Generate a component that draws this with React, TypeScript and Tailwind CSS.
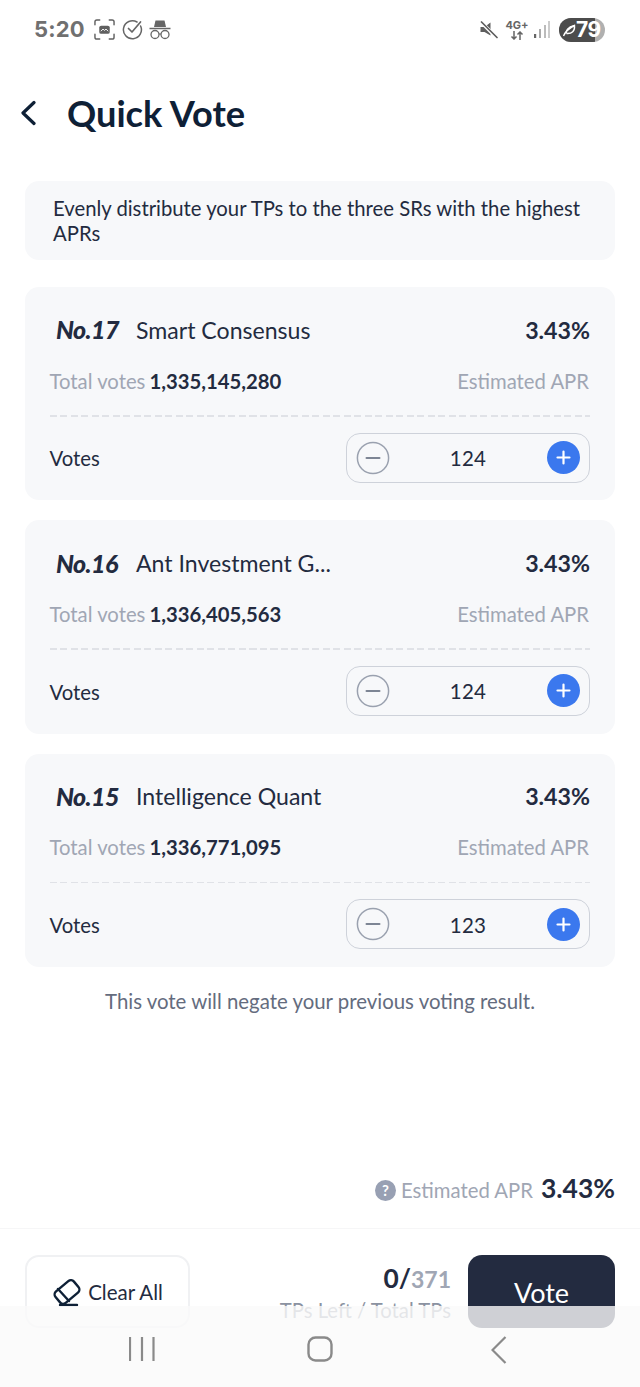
import React from "react";

function Minus() {
  return (
    <svg width="34" height="34" viewBox="0 0 34 34" fill="none">
      <circle cx="17" cy="17" r="15.6" stroke="#9aa1af" strokeWidth="1.5" />
      <path d="M10.5 17h13" stroke="#7d8594" strokeWidth="2" strokeLinecap="round" />
    </svg>
  );
}
function Plus() {
  return (
    <svg width="33" height="33" viewBox="0 0 33 33" fill="none">
      <circle cx="16.5" cy="16.5" r="16.5" fill="#3b78ee" />
      <path d="M10.5 16.5h12M16.5 10.5v12" stroke="#fff" strokeWidth="2.2" strokeLinecap="round" />
    </svg>
  );
}

function Card({ no, name, total, votes }: { no: string; name: string; total: string; votes: string }) {
  return (
    <div className="bg-[#f7f8fa] rounded-[14px] px-[25px] pt-[26px] h-[213.33px]">
      <div className="flex items-center justify-between h-[34px]">
        <div className="flex items-center">
          <span className="w-[86px] pl-[6px] text-[25px] font-black italic text-[#232b40] tracking-[-0.6px]">{no}</span>
          <span className="text-[23.1px] text-[#232b40]">{name}</span>
        </div>
        <span className="text-[23.2px] font-bold text-[#232b40]">3.43%</span>
      </div>
      <div className="flex items-center justify-between h-[34px] mt-[17px]">
        <div className="flex items-center -ml-[0.5px]">
          <span className="text-[20.3px] text-[#a0a6b4]">Total votes</span>
          <span className="text-[20.3px] font-bold text-[#232b40] ml-[4px]">{total}</span>
        </div>
        <span className="text-[20.3px] text-[#a0a6b4] mr-[1px]">Estimated APR</span>
      </div>
      <div className="h-[1.5px] mt-[17px] bg-[repeating-linear-gradient(90deg,#e0e2e7_0_7px,transparent_7px_10.5px)]" />
      <div className="flex items-center justify-between mt-[16px]">
        <span className="text-[20.3px] text-[#232b40] mt-[2px] -ml-[0.5px]">Votes</span>
        <div className="w-[244px] h-[50px] rounded-[14px] border border-[#ced2da] flex items-center justify-between pl-[9px] pr-[9px]">
          <Minus />
          <span className="text-[20.5px] text-[#232b40] tracking-[0.3px] mt-[2px] -ml-[1px]">{votes}</span>
          <Plus />
        </div>
      </div>
    </div>
  );
}

function StatusBar() {
  return (
    <div className="h-[58px] flex items-center justify-between pl-[34px] pr-[35px] pt-[1px] text-[#6a6a6a]">
      <div className="flex items-center">
        <span className="text-[22px] font-bold font-['Inter',sans-serif] tracking-[0.2px] text-[#707070] leading-none -mt-[2px]">5:20</span>
        <svg className="ml-[9px]" width="21" height="21" viewBox="0 0 22 22" fill="none" stroke="#606060" strokeWidth="1.5" strokeLinecap="round">
          <path d="M1 6V3a2 2 0 0 1 2-2h3M16 1h3a2 2 0 0 1 2 2v3M21 16v3a2 2 0 0 1-2 2h-3M6 21H3a2 2 0 0 1-2-2v-3" />
          <rect x="5.500" y="7" width="11" height="8.500" rx="2" fill="#606060" stroke="none" />
          <path d="M7.500 12.500l2-2 1.500 1.500 1.500-1.500 2 2" stroke="#fff" strokeWidth="1" />
        </svg>
        <svg className="ml-[7px]" width="21" height="21" viewBox="0 0 21 21" fill="none" stroke="#666" strokeWidth="1.5" strokeLinecap="round" strokeLinejoin="round">
          <path d="M18.600 7a9 9 0 1 1-3.600-4" />
          <path d="M6.500 9.500l3.500 3.500 8.500-10" strokeWidth="1.700" />
        </svg>
        <svg className="ml-[6px]" width="22" height="21" viewBox="0 0 22 21" fill="none" stroke="#666">
          <path d="M5 8l1.500-6.500h9L17 8z" fill="#666" stroke="none" />
          <path d="M0.500 9.500h21" strokeWidth="1.500" />
          <circle cx="6" cy="15.500" r="4" strokeWidth="1.300" />
          <circle cx="16" cy="15.500" r="4" strokeWidth="1.300" />
          <path d="M10 15h2" strokeWidth="1.200" />
        </svg>
      </div>
      <div className="flex items-center">
        <svg width="18" height="18" viewBox="0 0 18 18" className="mr-[9px]">
          <path d="M0.500 6h4L10.500 1.500v13L4.500 11h-4z" fill="#5e5e5e" />
          <path d="M1 1l16 16" stroke="#fff" strokeWidth="3.500" />
          <path d="M1.500 1l15.500 15.500" stroke="#5e5e5e" strokeWidth="1.700" strokeLinecap="round" />
        </svg>
        <div className="flex flex-col items-center w-[20px] mr-[7px] leading-none text-[#666]">
          <span className="text-[11px] font-bold font-['Inter',sans-serif] leading-[11px]">4G+</span>
          <svg width="14" height="9" viewBox="0 0 14 9" fill="none" stroke="#666" strokeWidth="1.500">
            <path d="M4 0v8M1.500 5.500L4 8l2.500-2.500M10 9V1M7.500 3.500L10 1l2.500 2.500" />
          </svg>
        </div>
        <svg width="16" height="18" viewBox="0 0 16 18" className="mr-[9px]">
          <rect x="0" y="13" width="2.200" height="4" fill="#666" />
          <rect x="5" y="8" width="2" height="9" fill="#aaa" />
          <rect x="10" y="4" width="2" height="13" fill="#bbb" />
          <rect x="14" y="0" width="2" height="17" fill="#ccc" />
        </svg>
        <div className="relative w-[46px] h-[24px] rounded-[12px] bg-[#b0b0b0] overflow-hidden">
          <div className="w-[36px] h-[24px] bg-[#4c4c4c]" />
          <svg className="absolute left-[3px] top-[6px]" width="14" height="13" viewBox="0 0 13 13" fill="none" stroke="#fff" strokeWidth="1.400">
            <path d="M1 12C3 7 7 4 12 1.500 12.500 7 9.500 10 4 9.500" />
            <path d="M4 9.500C3 7 5 3 12 1.500" />
          </svg>
          <span className="absolute left-[17px] top-[0px] text-[21px] font-bold text-white font-['Inter',sans-serif] leading-[24px] tracking-[-0.5px]">79</span>
        </div>
      </div>
    </div>
  );
}

export default function App() {
  return (
    <div className="relative h-[1387px] w-[640px] overflow-hidden bg-white flex flex-col font-['Lato',sans-serif]">
      <StatusBar />
      <div className="flex items-center h-[44px] mt-[33px] pl-[20px]">
        <svg width="16" height="26" viewBox="0 0 16 26" fill="none" stroke="#0e2036" strokeWidth="3.200" strokeLinecap="round" strokeLinejoin="round">
          <path d="M14 2.500L3 13l11 10.500" />
        </svg>
        <h1 className="ml-[31px] text-[36.2px] font-bold text-[#0e2036] leading-none">Quick Vote</h1>
      </div>
      <div className="mx-[25px] mt-[46px] bg-[#f7f8fa] rounded-[14px] h-[79px] pl-[28px] pr-[20px] pt-[15px] text-[20.3px] leading-[25px] text-[#232b40]">
        Evenly distribute your TPs to the three SRs with the highest APRs
      </div>
      <div className="mx-[25px] mt-[27px] flex flex-col gap-[20px]">
        <Card no="No.17" name="Smart Consensus" total="1,335,145,280" votes="124" />
        <Card no="No.16" name="Ant Investment G..." total="1,336,405,563" votes="124" />
        <Card no="No.15" name="Intelligence Quant" total="1,336,771,095" votes="123" />
      </div>
      <p className="mt-[21px] text-center text-[20.4px] leading-[26px] text-[#646c7e]">This vote will negate your previous voting result.</p>
      <div className="mt-auto">
        <div className="flex items-center justify-end pr-[25px] h-[40px]">
          <svg width="21" height="21" viewBox="0 0 21 21" className="mt-[2px]">
            <circle cx="10.500" cy="10.500" r="10.500" fill="#98a0b3" />
            <text x="10.500" y="16" textAnchor="middle" fontSize="15" fontWeight="700" fill="#fff" fontFamily="Lato">?</text>
          </svg>
          <span className="ml-[5px] text-[20.3px] text-[#a0a6b4] mt-[2px]">Estimated APR</span>
          <span className="ml-[8px] text-[26.500px] font-bold text-[#232b40]">3.43%</span>
        </div>
        <div className="mt-[19px] border-t border-[#f6f6f7] h-[159px] px-[25px] pt-[26px] flex items-start justify-between">
          <div className="w-[165px] h-[73px] pt-[2px] rounded-[14px] border-2 border-[#f0f1f3] flex items-center justify-center">
            <svg width="30" height="30" viewBox="0 0 30 30" fill="none" stroke="#0e2036" strokeWidth="2.400" strokeLinejoin="round" strokeLinecap="round" className="mt-[1px]">
              <rect x="3" y="6.500" width="24" height="15" rx="4" transform="rotate(-40 15 14)" />
              <path d="M6 11l11 12" />
              <path d="M8 27h17" />
            </svg>
            <span className="ml-[6px] text-[20.500px] text-[#232b40]">Clear All</span>
          </div>
          <div className="ml-auto mr-[17px] flex flex-col items-end pt-[8px]">
            <div className="text-[26.300px] leading-[30px] font-bold text-[#232b40]">
              0/<span className="text-[#a0a6b4] text-[23px]">371</span>
            </div>
            <div className="text-[20.3px] leading-[26px] mt-[3px] text-[#8b92a1]">TPs Left / Total TPs</div>
          </div>
          <div className="w-[147px] h-[73px] pt-[3px] rounded-[14px] bg-[#232b40] flex items-center justify-center text-[27px] text-white">Vote</div>
        </div>
      </div>
      <div className="absolute left-0 right-0 bottom-0 h-[81px] bg-[#fafafa]/80 flex items-start justify-between pl-[129px] pr-[133px] pt-[30px]">
        <svg width="26" height="26" viewBox="0 0 26 26" stroke="#8a8a8a" strokeWidth="2.200" fill="none">
          <path d="M1 1v24M13 1v24M24.500 1v24" />
        </svg>
        <svg width="26" height="26" viewBox="0 0 26 26" stroke="#8a8a8a" strokeWidth="2.400" fill="none" className="mr-[7px]">
          <rect x="1.500" y="1.500" width="23" height="23" rx="7" />
        </svg>
        <svg width="16" height="28" viewBox="0 0 16 28" stroke="#8a8a8a" strokeWidth="2.200" fill="none">
          <path d="M14.500 1L1.500 14l13 13" />
        </svg>
      </div>
    </div>
  );
}
